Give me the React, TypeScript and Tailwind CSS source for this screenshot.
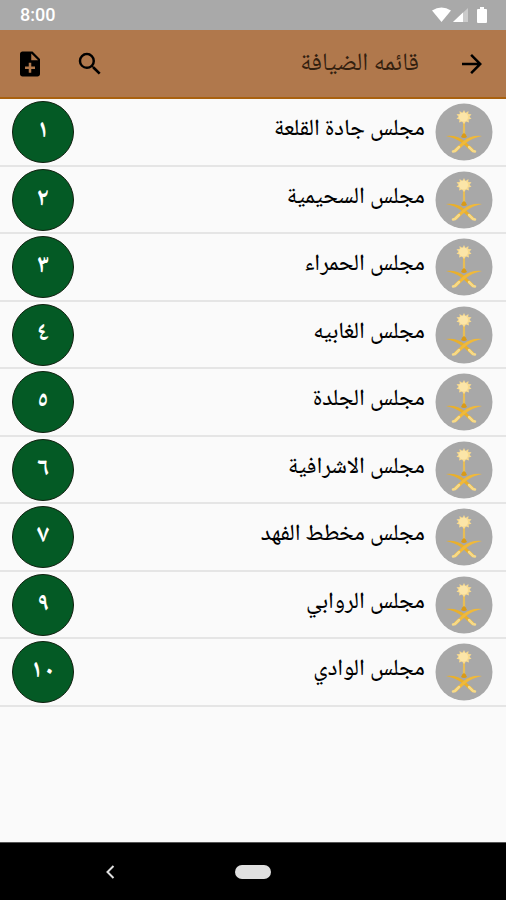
import { MdArrowForward, MdNoteAdd, MdSearch } from "react-icons/md";

const councils = [
  { number: "١", name: "مجلس جادة القلعة" },
  { number: "٢", name: "مجلس السحيمية" },
  { number: "٣", name: "مجلس الحمراء" },
  { number: "٤", name: "مجلس الغابيه" },
  { number: "٥", name: "مجلس الجلدة" },
  { number: "٦", name: "مجلس الاشرافية" },
  { number: "٧", name: "مجلس مخطط الفهد" },
  { number: "٩", name: "مجلس الروابي" },
  { number: "١٠", name: "مجلس الوادي" },
];

function StatusBar() {
  return (
    <div dir="ltr" className="flex h-[30px] items-center justify-between bg-[#a9a9a9] pr-[18px] pl-5 text-white">
      <span className="font-[Roboto,sans-serif] text-[18px] leading-5 font-medium">8:00</span>
      <svg width="56" height="16" viewBox="0 0 56 16" fill="currentColor" aria-hidden="true">
        <path d="M0 3.500Q9.500 -2.500 19 3.500L9.500 15Z" />
        <path d="M36 1V15H21Z" opacity=".4" />
        <path d="M31 5.500V15H21Z" />
        <path d="M46 2h2V0h4v2h2q1 0 1 1v12q0 1-1 1h-8q-1 0-1-1V3q0-1 1-1Z" />
      </svg>
    </div>
  );
}

function Header() {
  return (
    <header className="flex h-[69px] items-center border-b-2 border-[#a9610f] bg-[#b0784c] pr-[19px] pl-[15px] text-black">
      <button type="button" aria-label="رجوع">
        <MdArrowForward size={30} />
      </button>
      <h1 className="mr-[38px] flex-1 pt-[2px] text-[25px] leading-8 text-[#33200f]">قائمه الضيافة</h1>
      <button type="button" aria-label="بحث" className="ml-[30px]">
        <MdSearch size={30} />
      </button>
      <button type="button" aria-label="إضافة">
        <MdNoteAdd size={30} />
      </button>
    </header>
  );
}

function Emblem() {
  return (
    <svg width="58" height="58" viewBox="0 0 58 58" className="shrink-0" aria-hidden="true">
      <circle cx="29" cy="29" r="28.500" fill="#a8a8a8" />
      <path d="M28 19h2l.2 13h-2.400Z" fill="#e8bd55" />
      <path
        d="M29 7l1.500 3 3-2-.3 3 3.300.3-2 2.500 2 2-3 .7.500 3-3-1-2 2.500-2-2.500-3 1 .500-3-3-.7 2-2-2-2.500 3.300-.3-.3-3 3 2Z"
        fill="#f8da8e"
      />
      <circle cx="28.500" cy="14" r="4.500" fill="#fbe5a8" />
      <path d="M26 34q1-3 3-4 2 1 3 4-3 2-6 0Z" fill="#d99a17" />
      <path d="M11 33q12-1 19 5.500l9 8-2 2.500-10-9Q21 35 11 33Z" fill="#e9b02c" />
      <path d="M47 33q-12-1-19 5.500l-9 8 2 2.500 10-9Q37 35 47 33Z" fill="#f0b93a" />
      <g fill="none" stroke="#f8da86" strokeWidth="2.500" strokeLinecap="round">
        <path d="M24 44l-4 4-2 .5" />
        <path d="M34 44l4 4 2 .5" />
      </g>
    </svg>
  );
}

function CouncilRow({ number, name }: { number: string; name: string }) {
  return (
    <li className="flex h-[68px] items-center border-b-2 border-[#e5e5e5] pr-[13px] pl-3 even:h-[67px]">
      <Emblem />
      <span className="mr-[10px] flex-1 pb-1 text-[23px] leading-8 font-medium text-black">{name}</span>
      <span className="flex size-[62px] shrink-0 items-center justify-center rounded-full border border-[#10200f] bg-[#045a25] text-[25px] leading-8 font-bold text-white">
        {number}
      </span>
    </li>
  );
}

function NavigationBar() {
  return (
    <nav
      aria-label="النظام"
      dir="ltr"
      className="grid h-[58px] grid-cols-[1fr_36px_1fr] items-center border-t border-[#555] bg-black"
    >
      <button type="button" aria-label="السابق" className="mr-[16px] justify-self-center">
        <svg width="10" height="14" viewBox="0 0 10 14" fill="none" stroke="#e0e0e0" strokeWidth="2" aria-hidden="true">
          <path d="M8.500 1L2.500 7l6 6" />
        </svg>
      </button>
      <button type="button" aria-label="الرئيسية" className="h-[14px] rounded-full bg-[#e0e0e0]" />
    </nav>
  );
}

export default function App() {
  return (
    <div
      dir="rtl"
      lang="ar"
      className="flex min-h-screen flex-col bg-[#fafafa] font-['Noto_Naskh_Arabic','Noto_Sans_Arabic','DejaVu_Sans',sans-serif]"
    >
      <StatusBar />
      <Header />
      <main className="flex-1">
        <ul>
          {councils.map((council) => (
            <CouncilRow key={council.number} {...council} />
          ))}
        </ul>
      </main>
      <NavigationBar />
    </div>
  );
}
